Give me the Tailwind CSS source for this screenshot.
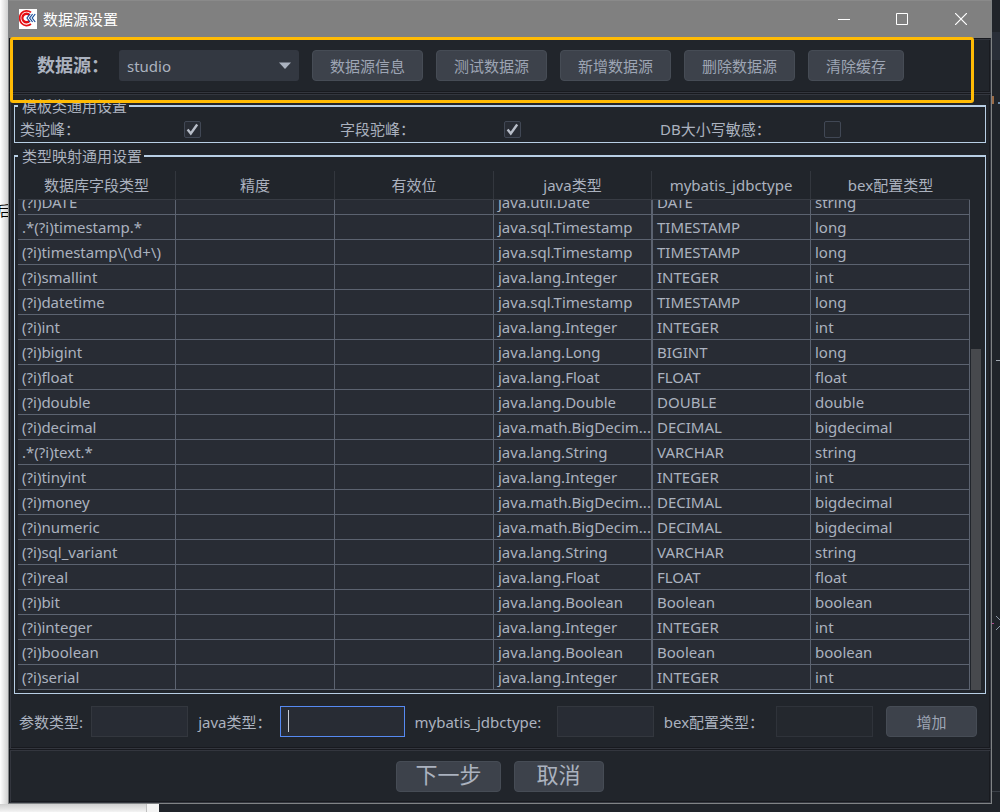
<!DOCTYPE html>
<html lang="zh-CN">
<head>
<meta charset="utf-8">
<title>数据源设置</title>
<script src="https://cdn.jsdelivr.net/npm/@tailwindcss/browser@4"></script>
</head>
<body class="relative min-h-screen overflow-hidden bg-[#20242a] font-['Noto_Sans','Noto_Sans_CJK_SC',sans-serif] text-[15px] leading-5 text-[#abb2bf]">

<!-- Windows behind the dialog -->
<div class="absolute inset-y-0 left-0 w-[159px] overflow-hidden bg-[#f4f4f4]">
  <div class="absolute inset-y-0 left-0 w-2 bg-linear-to-r from-white to-[#d0d0d0]"></div>
  <span class="absolute -left-[3px] top-[201px] text-sm text-black">后</span>
  <div class="absolute bottom-0 left-0 h-2 w-[147px] border-r border-[#c0c0c0] bg-linear-to-b from-[#cfcfcf] to-[#f4f4f4]"></div>
</div>
<div class="absolute right-0 top-8 h-7 w-2 bg-[#292e38]"></div>
<div class="absolute right-[6px] top-[96px] h-2 w-[2px] bg-[#9a6a45]"></div>
<div class="absolute right-0 top-[102px] size-[2px] bg-[#6f8fb0]"></div>
<div class="absolute right-0 top-[360px] h-px w-1 bg-[#a0a7b0]"></div>
<div class="absolute right-[6px] top-[623px] h-px w-[2px] bg-[#b04a90]"></div>
<svg class="absolute right-0 top-[615px] h-4 w-1" viewBox="0 0 4 16" fill="none" stroke="#8d97a5"><path d="M0 1 4 5M0 15l4-4"/></svg>
<div class="absolute right-0 top-[791px] h-px w-2 bg-[#3a3f47]"></div>

<main class="relative mx-2 mb-2 border border-t-0 border-[#808385] bg-[#21252b]">
  <header class="flex h-[38px] items-center border-t border-[#8a8a8a] bg-[#808080] pb-px pl-[10px] text-white">
    <svg class="h-5 w-[18px] bg-white" viewBox="0 0 18 20" fill="none">
      <path d="M12 3.4A7 7.4 0 1 0 12 15" stroke="#e60d12" stroke-width="1.8"/>
      <path d="M10.5 6.2A4 4.3 0 1 0 10.5 11.8" stroke="#e60d12" stroke-width="2.4"/>
      <path d="M11 5 8 9l3 4M13.6 5l-3 4 3 4M16.2 5l-3 4 3 4" stroke="#1b4f9c" stroke-width="1.2"/>
    </svg>
    <h1 class="ml-[6px] grow">数据源设置</h1>
    <button aria-label="最小化" class="flex h-full w-[58px] items-center justify-center"><svg class="size-3" viewBox="0 0 12 12" stroke="#fff"><path d="M0 6.5h12"/></svg></button>
    <button aria-label="最大化" class="flex h-full w-[58px] items-center justify-center"><svg class="size-3" viewBox="0 0 12 12" fill="none" stroke="#fff"><path d="M.5.5h11v11H.5z"/></svg></button>
    <button aria-label="关闭" class="flex h-full w-[60px] items-center justify-center"><svg class="size-3" viewBox="0 0 12 12" fill="none" stroke="#fff" stroke-width="1.2"><path d="m0 0 12 12M12 0 0 12"/></svg></button>
  </header>

  <!-- Data source toolbar -->
  <section class="flex h-[55px] items-center gap-[13px] border border-t-[#181a1f] border-r-[#33363e] border-b-[#33363e] border-l-[#181a1f] pl-[27px] shadow-[inset_1px_1px_#33363e,inset_-1px_-1px_#181a1f]">
    <div class="flex items-center">
      <label for="ds" class="w-[82px] pb-[2px] text-lg leading-6 font-bold">数据源：</label>
      <div class="relative">
        <select id="ds" class="h-[31px] w-[180px] appearance-none rounded-[3px] bg-[#333841] pl-2"><option>studio</option></select>
        <svg class="pointer-events-none absolute right-2 top-3 h-[7px] w-3" viewBox="0 0 12 7"><path d="M0 .5h12L6 7z" fill="#abb2bf"/></svg>
      </div>
    </div>
    <button class="h-[31px] rounded-[4px] border border-[#464c55] bg-[#3d424b] px-[17px] text-[#9da5b4]">数据源信息</button>
    <button class="h-[31px] rounded-[4px] border border-[#464c55] bg-[#3d424b] px-[17px] text-[#9da5b4]">测试数据源</button>
    <button class="h-[31px] rounded-[4px] border border-[#464c55] bg-[#3d424b] px-[17px] text-[#9da5b4]">新增数据源</button>
    <button class="h-[31px] rounded-[4px] border border-[#464c55] bg-[#3d424b] px-[17px] text-[#9da5b4]">删除数据源</button>
    <button class="h-[31px] rounded-[4px] border border-[#464c55] bg-[#3d424b] px-[17px] text-[#9da5b4]">清除缓存</button>
  </section>

  <section class="border border-t-[#181a1f] border-r-[#33363e] border-b-[#33363e] border-l-[#181a1f] px-1 pt-px pb-[11px] shadow-[inset_1px_1px_#33363e,inset_-1px_-1px_#181a1f]">
    <fieldset class="border border-t-2 border-[#b8cfe5] pl-[3px]">
      <legend class="h-[22px] pl-1 pr-[2px] leading-[22px]">模板类通用设置</legend>
      <div class="grid grid-cols-3 pt-px pl-[2px] pr-[5px] pb-[2px]">
        <div class="flex h-[22px] items-center"><label for="c1" class="w-[164px]">类驼峰：</label>
          <span class="relative flex"><input id="c1" type="checkbox" checked class="peer size-[17px] appearance-none rounded-[2px] border border-[#414855] bg-[#282c34]"><svg class="pointer-events-none absolute inset-0 hidden size-[17px] peer-checked:block" viewBox="0 0 17 17" fill="none" stroke="#b8bec9" stroke-width="2.4"><path d="m3.6 8.5 3.2 4 6.4-9"/></svg></span></div>
        <div class="flex h-[22px] items-center"><label for="c2" class="w-[164px]">字段驼峰：</label>
          <span class="relative flex"><input id="c2" type="checkbox" checked class="peer size-[17px] appearance-none rounded-[2px] border border-[#414855] bg-[#282c34]"><svg class="pointer-events-none absolute inset-0 hidden size-[17px] peer-checked:block" viewBox="0 0 17 17" fill="none" stroke="#b8bec9" stroke-width="2.4"><path d="m3.6 8.5 3.2 4 6.4-9"/></svg></span></div>
        <div class="flex h-[22px] items-center"><label for="c3" class="w-[164px]">DB大小写敏感：</label>
          <span class="relative flex"><input id="c3" type="checkbox" class="peer size-[17px] appearance-none rounded-[2px] border border-[#414855] bg-[#24282e]"><svg class="pointer-events-none absolute inset-0 hidden size-[17px] peer-checked:block" viewBox="0 0 17 17" fill="none" stroke="#b8bec9" stroke-width="2.4"><path d="m3.6 8.5 3.2 4 6.4-9"/></svg></span></div>
      </div>
    </fieldset>

    <fieldset class="mt-[2px] border border-t-2 border-[#b8cfe5] pb-[3px] pl-[3px]">
      <legend class="h-[22px] pl-1 pr-[2px] leading-[22px]">类型映射通用设置</legend>
      <div class="flex pr-[3px]">
        <table class="grow table-fixed border-separate border-spacing-0">
          <colgroup><col class="w-[158px]"><col class="w-[159px]"><col class="w-[159px]"><col class="w-[158px]"><col class="w-[159px]"><col class="w-[159px]"></colgroup>
          <thead>
            <tr class="h-[33px]" id="head"></tr>
          </thead>
          <tbody id="rows"></tbody>
        </table>
        <div class="mt-[33px] flex w-3 flex-col justify-end pl-px"><div class="h-[341px] w-[10px] bg-[#47494d]"></div></div>
      </div>
    </fieldset>

    <form class="mt-3 grid grid-cols-[72px_97fr_92px_124fr_152px_97fr_122px_97fr_104px] items-center pl-[5px] pr-[9px]">
      <label for="p1">参数类型:</label>
      <input id="p1" class="h-[31px] w-full border border-[#33373e] bg-[#282c34] px-1">
      <label for="p2" class="pl-[10px]">java类型：</label>
      <div class="relative">
        <input id="p2" class="h-[31px] w-full border border-[#568af2] bg-[#282c34] px-1">
        <span class="absolute left-2 top-1 h-[22px] w-px bg-[#c8ccd4]"></span>
      </div>
      <label for="p3" class="pl-[10px]">mybatis_jdbctype:</label>
      <input id="p3" class="h-[31px] w-full border border-[#33373e] bg-[#282c34] px-1">
      <label for="p4" class="pl-[10px]">bex配置类型：</label>
      <input id="p4" class="h-[31px] w-full border border-[#2f333a] bg-[#24282e] px-1">
      <button type="button" class="ml-[13px] h-[31px] rounded-[4px] border border-[#464c55] bg-[#3d424b] text-[#9da5b4]">增加</button>
    </form>
  </section>

  <footer class="flex h-[54px] items-center justify-center gap-[13px] border border-t-[#181a1f] border-r-[#33363e] border-b-[#33363e] border-l-[#181a1f] shadow-[inset_1px_1px_#33363e,inset_-1px_-1px_#181a1f]">
    <button class="h-[31px] rounded-[4px] border border-[#464c55] bg-[#3d424b] px-[18px] pb-1 text-[22px] leading-6">下一步</button>
    <button class="h-[31px] rounded-[4px] border border-[#464c55] bg-[#3d424b] px-[22px] pb-1 text-[22px] leading-6">取消</button>
  </footer>
</main>

<!-- Highlight frame around the toolbar -->
<div class="pointer-events-none absolute left-[10px] right-[26px] top-[37px] h-[66px] rounded-[3px] border-[3px] border-[#ffbb05]"></div>

<script>
const heads = ["数据库字段类型", "精度", "有效位", "java类型", "mybatis_jdbctype", "bex配置类型"];
const rows = [
  ["(?i)DATE", "java.util.Date", "DATE", "string"],
  [".*(?i)timestamp.*", "java.sql.Timestamp", "TIMESTAMP", "long"],
  ["(?i)timestamp\\(\\d+\\)", "java.sql.Timestamp", "TIMESTAMP", "long"],
  ["(?i)smallint", "java.lang.Integer", "INTEGER", "int"],
  ["(?i)datetime", "java.sql.Timestamp", "TIMESTAMP", "long"],
  ["(?i)int", "java.lang.Integer", "INTEGER", "int"],
  ["(?i)bigint", "java.lang.Long", "BIGINT", "long"],
  ["(?i)float", "java.lang.Float", "FLOAT", "float"],
  ["(?i)double", "java.lang.Double", "DOUBLE", "double"],
  ["(?i)decimal", "java.math.BigDecim...", "DECIMAL", "bigdecimal"],
  [".*(?i)text.*", "java.lang.String", "VARCHAR", "string"],
  ["(?i)tinyint", "java.lang.Integer", "INTEGER", "int"],
  ["(?i)money", "java.math.BigDecim...", "DECIMAL", "bigdecimal"],
  ["(?i)numeric", "java.math.BigDecim...", "DECIMAL", "bigdecimal"],
  ["(?i)sql_variant", "java.lang.String", "VARCHAR", "string"],
  ["(?i)real", "java.lang.Float", "FLOAT", "float"],
  ["(?i)bit", "java.lang.Boolean", "Boolean", "boolean"],
  ["(?i)integer", "java.lang.Integer", "INTEGER", "int"],
  ["(?i)boolean", "java.lang.Boolean", "Boolean", "boolean"],
  ["(?i)serial", "java.lang.Integer", "INTEGER", "int"]
];
document.getElementById("head").innerHTML = heads.map((h, i) =>
  `<th class="border-b border-[#383c44] p-0 pt-[3px] font-normal"><div class="flex h-[28px] items-center justify-center border-[#33373e] ${i < 5 ? "border-r" : ""}">${h}</div></th>`).join("");
// The first row is partly scrolled under the header.
document.getElementById("rows").innerHTML = rows.map((r, n) => {
  const cells = [r[0], "", "", r[1], r[2], r[3]];
  return "<tr>" + cells.map((c, i) =>
    `<td class="border-r border-b border-[#5c6370] bg-[#282c34] p-0 ${i === 4 ? "border-l" : ""}"><div class="flex items-end overflow-hidden whitespace-nowrap pl-1 ${n ? "h-6" : "h-[14px]"}"><span class="h-6 leading-6">${c}</span></div></td>`).join("") + "</tr>";
}).join("");
</script>
</body>
</html>
